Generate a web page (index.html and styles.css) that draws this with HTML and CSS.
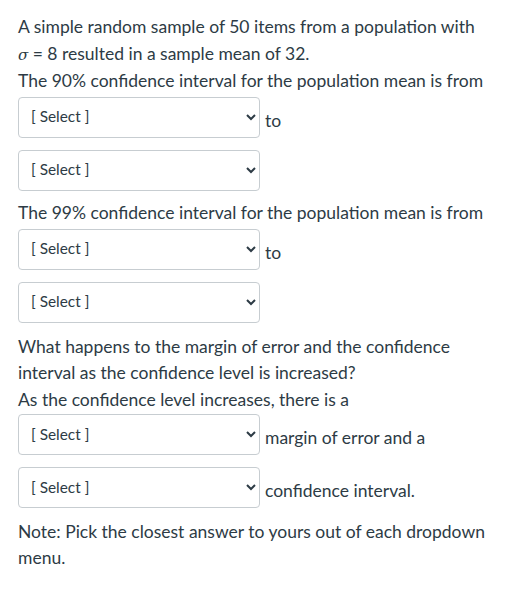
FILE: index.html
```html
<!DOCTYPE html>
<html lang="en">
<head>
<meta charset="utf-8">
<title>Confidence interval question</title>
<link rel="stylesheet" href="styles.css">
</head>
<body>
<div class="question">
  <p class="text intro">A simple random sample of 50 items from a population with <span class="sigma">σ</span> = 8 resulted in a sample mean of 32.<br>The 90% confidence interval for the population mean is from</p>
  <div class="row first">
    <select class="dd"><option>[ Select ]</option></select>
    <span class="after">to</span>
  </div>
  <div class="row">
    <select class="dd"><option>[ Select ]</option></select>
  </div>
  <p class="text second">The 99% confidence interval for the population mean is from</p>
  <div class="row first">
    <select class="dd"><option>[ Select ]</option></select>
    <span class="after">to</span>
  </div>
  <div class="row">
    <select class="dd"><option>[ Select ]</option></select>
  </div>
  <p class="text third">What happens to the margin of error and the confidence interval as the confidence level is increased?<br>As the confidence level increases, there is a</p>
  <div class="row tight">
    <select class="dd"><option>[ Select ]</option></select>
    <span class="after">margin of error and a</span>
  </div>
  <div class="row">
    <select class="dd"><option>[ Select ]</option></select>
    <span class="after">confidence interval.</span>
  </div>
  <p class="text note">Note: Pick the closest answer to yours out of each dropdown menu.</p>
</div>
</body>
</html>
```
FILE: styles.css
```css
html, body {
  margin: 0;
  padding: 0;
  background: #ffffff;
}

body {
  font-family: Lato, "Open Sans", "Liberation Sans", sans-serif;
  font-size: 17.5px;
  color: #2d3b45;
}

.question {
  padding: 0 18px;
  width: 470px;
}

.text {
  margin: 0;
  line-height: 26.5px;
}

.intro {
  padding-top: 14px;
}

.sigma {
  font-style: italic;
  font-family: "DejaVu Serif", "Liberation Serif", serif;
  font-size: 15px;
}

.second {
  margin-top: 9.5px;
}

.third {
  margin-top: 11px;
}

.note {
  margin-top: 10.5px;
  line-height: 26px;
}

.row {
  display: flex;
  align-items: flex-start;
  gap: 5px;
  margin-top: 12px;
}

.row.first {
  margin-top: 2px;
}

.row.tight {
  margin-top: 1px;
}

.dd {
  width: 242px;
  height: 41px;
  margin: 0;
  padding: 0 8px 2px 8px;
  border: 1px solid #c7cdd1;
  border-radius: 4px;
  background-color: #ffffff;
  color: #2d3b45;
  font-family: Lato, "Open Sans", "Liberation Sans", sans-serif;
  font-size: 15.4px;
}

.after {
  line-height: 26.5px;
  margin-top: 11px;
}
```
